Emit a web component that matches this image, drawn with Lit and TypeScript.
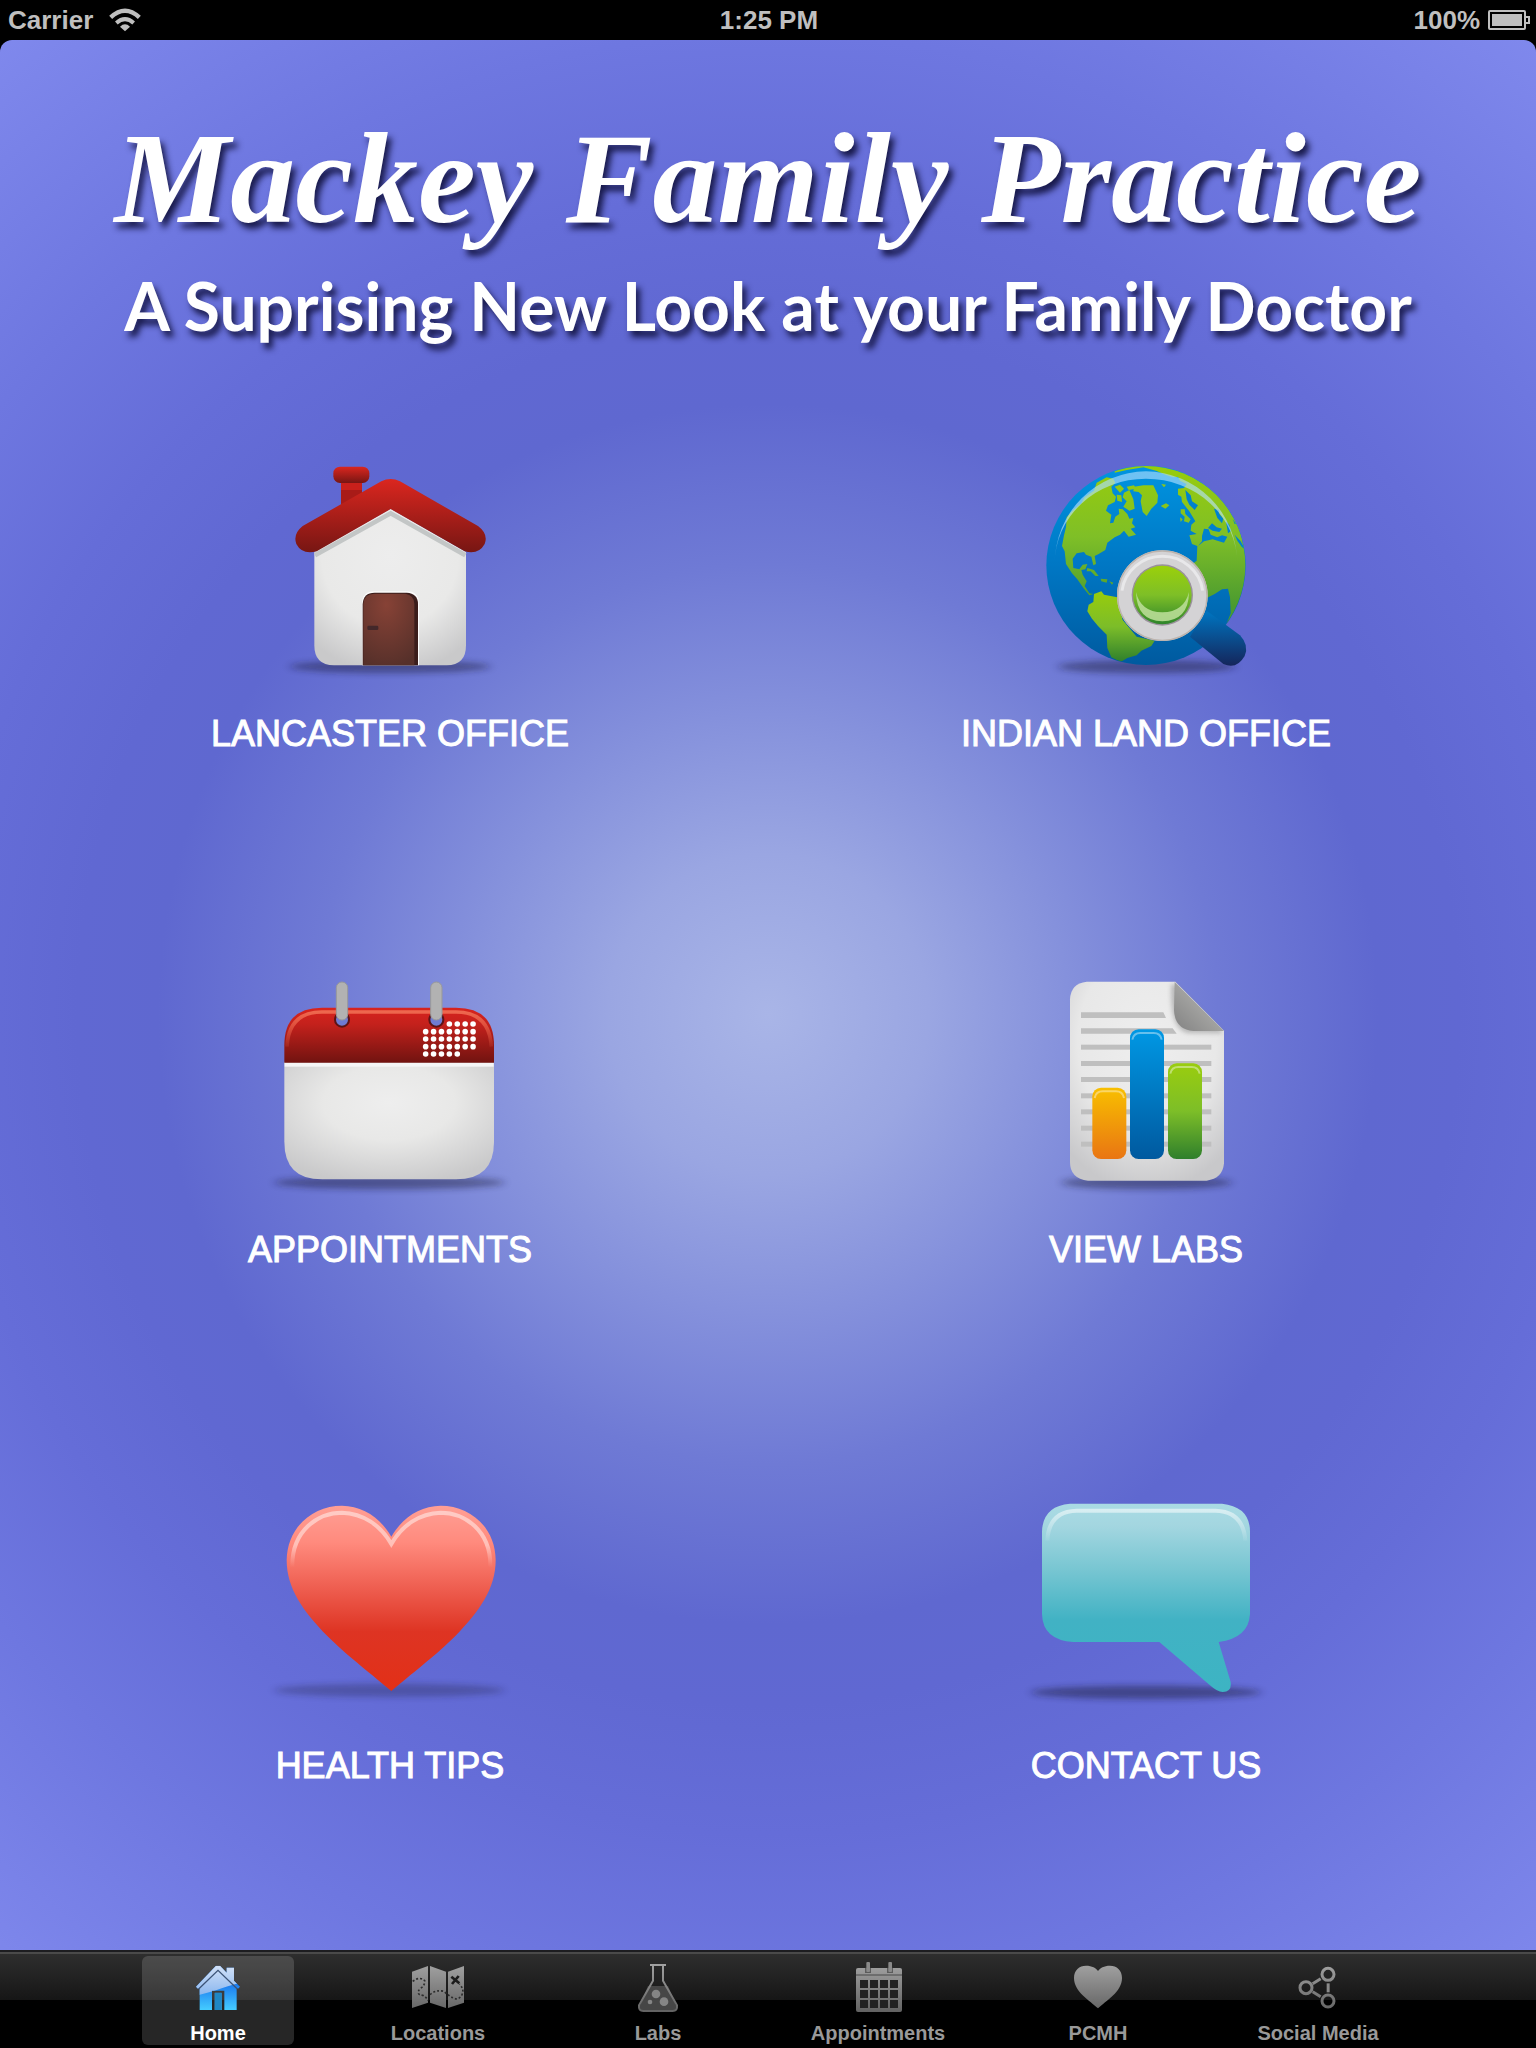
import { LitElement, html, svg, css } from "lit";
import { customElement, state } from "lit/decorators.js";

const dots: Array<[number, number]> = [];
[192, 215, 237, 260, 282].forEach((y, row) => {
  for (let col = 0; col < 7; col++) {
    if (row === 0 && col < 3) continue;
    if (row === 4 && col > 4) continue;
    dots.push([617 + col * 23.7, y]);
  }
});

const shadow = (id: string, cx: number, cy: number, rx: number, strength = 0.42) => svg`
  <defs>
    <filter id=${id} x="-20%" y="-150%" width="140%" height="400%">
      <feGaussianBlur stdDeviation="14 9" />
    </filter>
  </defs>
  <ellipse cx=${cx} cy=${cy} rx=${rx} ry="20" fill="#15152e" opacity=${strength} filter="url(#${id})" />`;

const houseArt = html`
  <svg class="art" viewBox="210 30 840 720" aria-hidden="true">
    <defs>
      <linearGradient id="roof" x1="0" y1="0" x2="0" y2="1">
        <stop offset="0" stop-color="#db261f" />
        <stop offset="1" stop-color="#771613" />
      </linearGradient>
      <radialGradient id="wall" cx=".5" cy=".3" r=".75">
        <stop offset="0" stop-color="#ededed" />
        <stop offset=".6" stop-color="#e9e9e8" />
        <stop offset="1" stop-color="#c9c9ca" />
      </radialGradient>
      <radialGradient id="door" cx=".45" cy=".15" r=".9">
        <stop offset="0" stop-color="#874236" />
        <stop offset="1" stop-color="#56302a" />
      </radialGradient>
    </defs>
    ${shadow("s1", 630, 680, 300)}
    <path d="M403 336 L632 206 L858 336 V616 Q858 676 800 676 H462 Q403 676 403 616Z" fill="url(#wall)" />
    <path d="M405 346 L632 220 L856 346" fill="none" stroke="#c3c6c6" stroke-width="14" />
    <path d="M546 676 V492 Q546 454 584 454 H680 Q717 454 717 492 V676Z" fill="#fbfbfb" />
    <path d="M548 676 V492 Q550 458 584 458 H680 Q714 460 714 492 V676Z" fill="#3b1d1b" />
    <path d="M550 676 V492 Q552 461 584 461 H676 Q703 466 703 492 V676Z" fill="url(#door)" />
    <rect x="562" y="557" width="33" height="13" rx="4" fill="#43282a" />
    <path d="M483 122 H546 V165 L483 200Z" fill="#a81b18" />
    <path d="M483 128 H546 V150 H483Z" fill="#c9201b" />
    <rect x="460" y="80" width="108" height="49" rx="20" fill="url(#roof)" />
    <path d="M604 124 Q632 110 660 124 L894 258 Q926 282 914 312 Q896 345 854 334 L632 207 L410 334 Q366 345 349 312 Q338 282 368 258Z" fill="url(#roof)" />
  </svg>`;

const globeArt = html`
  <svg class="art" viewBox="198 30 840 720" aria-hidden="true">
    <defs>
      <linearGradient id="sea" x1="0" y1="0" x2="0" y2="1">
        <stop offset="0" stop-color="#0094e0" />
        <stop offset=".5" stop-color="#0077c4" />
        <stop offset="1" stop-color="#005a9f" />
      </linearGradient>
      <linearGradient id="land" x1="0" y1="80" x2="0" y2="500" gradientUnits="userSpaceOnUse">
        <stop offset="0" stop-color="#98cc0c" />
        <stop offset=".5" stop-color="#7fbf27" />
        <stop offset="1" stop-color="#4a9a30" />
      </linearGradient>
      <linearGradient id="land2" x1="0" y1="455" x2="0" y2="665" gradientUnits="userSpaceOnUse">
        <stop offset="0" stop-color="#98cc0c" />
        <stop offset=".5" stop-color="#7cbd29" />
        <stop offset="1" stop-color="#2f802c" />
      </linearGradient>
      <linearGradient id="lens" x1="0" y1="0" x2="0" y2="1">
        <stop offset="0" stop-color="#9bd00a" />
        <stop offset=".5" stop-color="#7ebf27" />
        <stop offset="1" stop-color="#2d842b" />
      </linearGradient>
      <linearGradient id="grip" x1="0" y1="520" x2="0" y2="680" gradientUnits="userSpaceOnUse">
        <stop offset="0" stop-color="#0072bd" />
        <stop offset="1" stop-color="#152459" />
      </linearGradient>
      <linearGradient id="gloss" x1="0" y1="95" x2="0" y2="375" gradientUnits="userSpaceOnUse">
        <stop offset="0" stop-color="#a8dcff" stop-opacity=".65" />
        <stop offset=".6" stop-color="#c8e8ff" stop-opacity=".6" />
        <stop offset="1" stop-color="#c8e8ff" stop-opacity=".15" />
      </linearGradient>
      <clipPath id="ball"><circle cx="618" cy="376" r="298" /></clipPath>
    </defs>
    ${shadow("s2", 620, 680, 266)}
    <circle cx="618" cy="376" r="299" fill="url(#sea)" />
    <g clip-path="url(#ball)" fill="url(#land)">
      <path d="M470 128 L500 112 L520 116 L526 128 L514 140 L518 160 L528 170 L524 186 L504 196 L498 212 L514 224 L510 250 L520 248 L526 230 L538 222 L536 206 L548 208 L562 222 L568 236 L580 234 L576 250 L586 262 L572 266 L588 284 L566 290 L552 272 L540 284 L524 292 L502 308 L496 330 L476 342 L464 348 L468 372 L460 376 L454 350 L438 344 L432 336 L410 340 L398 356 L400 384 L418 388 L428 374 L442 372 L436 388 L424 390 L428 404 L440 424 L434 438 L448 460 L460 462 L448 466 L432 446 L412 418 L396 400 L378 372 L374 334 L366 318 L372 286 L378 262 L380 232 L400 210 L424 190 L434 172 L462 152Z" />
      <path d="M524 140 L540 134 L552 146 L540 158Z M560 140 L582 136 L588 146 L566 150Z M552 158 L568 150 L580 178 L584 206 L568 212 L550 200 L560 184 L548 172Z M530 164 L544 166 L546 186 L532 182Z" />
      <path d="M582 140 L610 136 L640 136 L654 166 L652 188 L634 206 L620 228 L608 216 L602 184 L606 166 L596 156 L580 154Z" />
      <path d="M662 198 L678 190 L688 196 L676 206Z M664 132 L678 134 L672 142Z" />
      <path d="M442 384 L462 390 L476 408 L466 408 L452 394 L440 394Z M482 416 L502 418 L500 428 L484 424Z M508 424 L520 428 L516 434Z" />
      <path d="M524 70 H712 L722 110 L698 112 L676 104 L648 92 L610 82 L560 90 L524 98Z" />
      <path d="M700 84 Q890 160 924 350 L924 420 L900 524 L858 556 L872 520 L870 472 L864 446 L846 448 L824 462 L800 474 L764 440 L762 368 L770 362 L772 318 L756 312 L748 286 L770 282 L752 272 L754 254 L766 244 L748 214 L726 186 L724 170 L714 164 L714 146 L732 144 L740 132 L720 122Z" />
      <path d="M722 208 L734 208 L736 222 L752 238 L746 248 L732 244 L734 230 L722 220Z M720 232 L728 238 L722 246Z" />
      <path d="M740 70 H930 V300 L900 300 L800 150Z" />
    </g>
    <g clip-path="url(#ball)" fill="#0081cf">
      <path d="M736 150 L752 166 L756 184 L774 196 L764 210 L748 194 L740 178Z" />
      <path d="M786 288 L792 266 L806 268 L812 284 L832 292 L846 286 L862 290 L852 308 L832 302 L818 298 L792 304 L774 318 L786 304Z" />
      <path d="M804 264 L816 250 L830 262 L846 266 L838 276 L818 272Z M822 206 L836 210 L838 222 L850 236 L846 250 L832 234Z M858 244 L868 254 L872 274 L864 280Z" />
      <path d="M884 284 L902 304 L914 326 L906 322 L892 302Z M878 236 L888 252 L884 252Z" />
    </g>
    <g clip-path="url(#ball)">
      <path d="M462 462 L484 454 L492 464 L532 472 L548 540 L590 590 L644 602 L634 618 L604 632 L590 646 L562 654 L542 666 L514 652 L502 624 L500 584 L474 558 L456 536 L442 514 L446 494 L460 486Z" fill="url(#land2)" />
    </g>
    <path d="M344 372 A274 278 0 0 1 892 372 A274 256 0 0 0 344 372Z" fill="url(#gloss)" />
    <path d="M750 590 L800 512 L900 586 Q928 616 914 648 Q890 690 850 672Z" fill="url(#grip)" />
    <circle cx="667" cy="467" r="136" fill="#d4d3d5" />
    <circle cx="667" cy="467" r="134" fill="none" stroke="#bcb3ad" stroke-width="4" />
    <path d="M546 452 A122 118 0 0 1 788 452" fill="none" stroke="#efeff0" stroke-width="9" opacity=".75" />
    <circle cx="667" cy="465" r="92" fill="#99919b" />
    <circle cx="667" cy="465" r="88" fill="url(#lens)" />
    <path d="M588 456 Q602 516 667 517 Q732 516 747 456 Q746 542 667 544 Q590 542 588 456Z" fill="#b9dd96" opacity=".9" />
  </svg>`;

const calendarArt = html`
  <svg class="art" viewBox="90 18 840 720" aria-hidden="true">
    <defs>
      <linearGradient id="band" x1="0" y1="0" x2="0" y2="1">
        <stop offset="0" stop-color="#d8241e" />
        <stop offset=".3" stop-color="#c4211c" />
        <stop offset="1" stop-color="#711310" />
      </linearGradient>
      <radialGradient id="sheet" cx=".5" cy=".35" r=".7">
        <stop offset="0" stop-color="#eeeeee" />
        <stop offset=".45" stop-color="#e8e8e7" />
        <stop offset="1" stop-color="#c9c9ca" />
      </radialGradient>
      <linearGradient id="shine" x1="0" y1="150" x2="0" y2="265" gradientUnits="userSpaceOnUse">
        <stop offset="0" stop-color="#ef6a50" />
        <stop offset="1" stop-color="#ef6a50" stop-opacity=".1" />
      </linearGradient>
    </defs>
    ${shadow("s3", 508, 668, 345)}
    <path d="M193 305 H822 V545 Q822 658 708 658 H306 Q193 658 193 545Z" fill="url(#sheet)" />
    <rect x="194" y="308" width="627" height="12" fill="#f5f5f6" />
    <path d="M193 308 V256 Q193 143 306 143 H708 Q822 143 822 256 V308Z" fill="url(#band)" />
    <path d="M201 260 Q206 156 306 156 H708 Q808 156 814 260" fill="none" stroke="url(#shine)" stroke-width="11" />
    ${[366, 649].map(
      (x) => svg`
        <circle cx=${x} cy="179" r="21" fill="#6f7bd2" stroke="#5c1416" stroke-width="6" />
        <rect x=${x - 17} y="66" width="34" height="114" rx="17" fill="#b2b2b2" stroke="#999" stroke-width="3" />`
    )}
    ${dots.map(([x, y]) => svg`<circle cx=${x} cy=${y} r="8.4" fill="#fff" />`)}
  </svg>`;

const reportArt = html`
  <svg class="art" viewBox="78 18 840 720" aria-hidden="true">
    <defs>
      <radialGradient id="page" cx=".5" cy=".3" r=".75">
        <stop offset="0" stop-color="#eeeeee" />
        <stop offset=".6" stop-color="#e8e8e8" />
        <stop offset="1" stop-color="#c8c8ca" />
      </radialGradient>
      <linearGradient id="curl" x1="0" y1="1" x2="1" y2="0">
        <stop offset="0" stop-color="#828282" />
        <stop offset=".5" stop-color="#a2a2a0" />
        <stop offset="1" stop-color="#8a8a8a" />
      </linearGradient>
      <linearGradient id="orange" x1="0" y1="0" x2="0" y2="1">
        <stop offset="0" stop-color="#f8bf00" />
        <stop offset="1" stop-color="#e97513" />
      </linearGradient>
      <linearGradient id="blue" x1="0" y1="0" x2="0" y2="1">
        <stop offset="0" stop-color="#0098e4" />
        <stop offset="1" stop-color="#00599f" />
      </linearGradient>
      <linearGradient id="green" x1="0" y1="0" x2="0" y2="1">
        <stop offset="0" stop-color="#9acd0e" />
        <stop offset=".5" stop-color="#7dbe28" />
        <stop offset="1" stop-color="#2f7f2c" />
      </linearGradient>
      <filter id="soft"><feGaussianBlur stdDeviation="6" /></filter>
    </defs>
    ${shadow("s4", 500, 668, 255)}
    <path d="M320 65 H586 L732 212 V610 Q728 656 680 662 H324 Q270 656 270 606 V118 Q272 70 320 65Z" fill="url(#page)" />
    <g fill="#bfbfbf">
      <path d="M303 157 H550 L558 174 H303Z M303 205 H578 L590 221 H303Z" />
      ${[254, 303, 351, 400, 448, 497, 545].map(
        (y) => svg`<rect x="303" y=${y} width="391" height="15" />`
      )}
    </g>
    <path d="M574 72 Q566 216 630 220 H722 L726 214 L586 72Z" fill="#888" opacity=".5" filter="url(#soft)" />
    <path d="M584 66 L732 213 H640 Q584 208 582 150Z" fill="url(#curl)" />
    <rect x="337" y="383" width="102" height="214" rx="26" fill="url(#orange)" />
    <rect x="450" y="208" width="102" height="389" rx="26" fill="url(#blue)" />
    <rect x="564" y="310" width="102" height="287" rx="26" fill="url(#green)" />
    <g fill="none" stroke="#fff" stroke-width="6" opacity=".4">
      <path d="M344 414 Q348 394 368 394 H408 Q428 394 432 414" />
      <path d="M457 239 Q461 219 481 219 H521 Q541 219 545 239" />
      <path d="M571 341 Q575 321 595 321 H635 Q655 321 659 341" />
    </g>
  </svg>`;

const heartArt = html`
  <svg class="art" viewBox="90 6 840 720" aria-hidden="true">
    <defs>
      <linearGradient id="heart" x1="0" y1="0" x2="0" y2="1">
        <stop offset="0" stop-color="#ff9f95" />
        <stop offset=".2" stop-color="#ff8a7d" />
        <stop offset=".45" stop-color="#ee5d4f" />
        <stop offset=".68" stop-color="#de3423" />
        <stop offset="1" stop-color="#e23017" />
      </linearGradient>
      <linearGradient id="rim" x1="0" y1="95" x2="0" y2="262" gradientUnits="userSpaceOnUse">
        <stop offset="0" stop-color="#ffcbc5" />
        <stop offset=".6" stop-color="#ffc0b8" />
        <stop offset="1" stop-color="#ffb0a8" stop-opacity="0" />
      </linearGradient>
    </defs>
    ${shadow("s5", 508, 631, 345, 0.28)}
    <path d="M514 633 C430 562 385 530 322 468 C250 394 200 326 200 240 C202 140 280 77 366 77 C428 78 480 112 514 170 C548 112 600 78 662 77 C748 77 826 140 827 240 C827 326 778 394 706 468 C643 530 598 562 514 633Z" fill="url(#heart)" />
    <path d="M217 262 C214 150 296 98 366 98 C430 100 482 136 514 192 C546 136 598 100 662 98 C732 98 814 150 811 262" fill="none" stroke="url(#rim)" stroke-width="12" />
  </svg>`;

const bubbleArt = html`
  <svg class="art" viewBox="78 6 840 720" aria-hidden="true">
    <defs>
      <linearGradient id="bubble" x1="0" y1="70" x2="0" y2="635" gradientUnits="userSpaceOnUse">
        <stop offset="0" stop-color="#aadbe4" />
        <stop offset=".12" stop-color="#a3d6e0" />
        <stop offset=".35" stop-color="#78c6d2" />
        <stop offset=".62" stop-color="#41b2c4" />
        <stop offset="1" stop-color="#3db4c3" />
      </linearGradient>
      <linearGradient id="edge" x1="0" y1="90" x2="0" y2="182" gradientUnits="userSpaceOnUse">
        <stop offset="0" stop-color="#d8eef2" />
        <stop offset="1" stop-color="#d8eef2" stop-opacity=".1" />
      </linearGradient>
    </defs>
    ${shadow("s6", 498, 637, 345, 0.45)}
    <path d="M270 71 H726 Q810 80 810 155 V402 Q806 474 716 486 L752 606 Q756 636 728 636 Q712 636 690 616 L538 486 H280 Q188 480 186 402 V155 Q188 78 270 71Z" fill="url(#bubble)" />
    <path d="M202 182 Q206 94 290 92 H706 Q790 94 796 182" fill="none" stroke="url(#edge)" stroke-width="12" />
  </svg>`;

const metal = (id: string) => svg`
  <linearGradient id=${id} x1="0" y1="10" x2="0" y2="156" gradientUnits="userSpaceOnUse">
    <stop offset="0" stop-color="#a3a3a3" />
    <stop offset="1" stop-color="#626262" />
  </linearGradient>`;

const tabHome = html`
  <svg class="glyph" viewBox="0 0 180 180" aria-hidden="true">
    <defs>
      <linearGradient id="hb" x1="0" y1="75" x2="0" y2="150" gradientUnits="userSpaceOnUse">
        <stop offset="0" stop-color="#1c7df0" />
        <stop offset="1" stop-color="#45ccff" />
      </linearGradient>
      <linearGradient id="hp" x1="0" y1="17" x2="0" y2="110" gradientUnits="userSpaceOnUse">
        <stop offset="0" stop-color="#d3e2f8" />
        <stop offset="1" stop-color="#86b4ee" />
      </linearGradient>
      <clipPath id="hclip">
        <path d="M84 17 H96 L116 38 V23 H138 V62 L156 80 L150 86 L146 83 V150 H109 V92 H72 V150 H35 V83 L30 86 L24 80Z M80 98 H101 V150 H80Z" />
      </clipPath>
    </defs>
    <g clip-path="url(#hclip)">
      <rect width="180" height="180" fill="url(#hb)" />
      <path d="M0 0 H180 V62 Q120 78 80 92 L30 106 L0 112Z" fill="url(#hp)" />
      <rect x="80" y="98" width="21" height="52" fill="#1f87c4" />
    </g>
    <path d="M32 87 L90 31 L148 87" fill="none" stroke="#3c5478" stroke-width="4" />
  </svg>`;

const tabMap = html`
  <svg class="glyph" viewBox="0 0 180 180" aria-hidden="true">
    <defs>${metal("m1")}</defs>
    <path d="M12 35 L60 18 V128 L12 144Z M66 18 L114 35 V144 L66 128Z M120 35 L168 18 V128 L120 144Z" fill="url(#m1)" />
    <path d="M14 64 Q36 48 50 62 Q52 76 36 86 Q22 104 44 106 Q56 112 60 122 M66 104 Q84 88 108 94 Q122 108 136 114 Q152 122 162 104 Q170 88 154 72" fill="none" stroke="#2c2c2c" stroke-width="5" stroke-dasharray="6 6" />
    <path d="M130 50 L154 70 M152 48 L132 72" stroke="#1c1c1c" stroke-width="8" />
  </svg>`;

const tabFlask = html`
  <svg class="glyph" viewBox="0 0 180 180" aria-hidden="true">
    <defs>${metal("m2")}</defs>
    <path d="M60 78 H120 L146 140 Q146 152 136 152 H44 Q34 152 34 140Z" fill="#464646" />
    <path d="M66 15 H114 M75 15 V62 L33 136 Q31 153 46 153 H134 Q149 153 147 136 L105 62 V15" fill="none" stroke="url(#m2)" stroke-width="6" />
    <g fill="#858585">
      <circle cx="84" cy="102" r="13" />
      <circle cx="66" cy="126" r="7" />
      <circle cx="108" cy="125" r="13" />
    </g>
  </svg>`;

const tabCalendar = html`
  <svg class="glyph" viewBox="0 0 180 180" aria-hidden="true">
    <defs>${metal("m3")}</defs>
    <rect x="24" y="24" width="138" height="132" rx="6" fill="url(#m3)" />
    <rect x="24" y="43" width="138" height="4" fill="#5c5c5c" />
    <g fill="#222">
      ${[60, 90, 120].map((y) =>
        [36, 66, 96, 126].map((x) => svg`<rect x=${x} y=${y} width="24" height="24" />`)
      )}
    </g>
    ${[60, 126].map(
      (x) => svg`<rect x=${x - 9} y="20" width="18" height="19" fill="#333" opacity=".6" /><rect x=${x - 5} y="6" width="11" height="30" rx="3" fill="#8a8a8a" />`
    )}
  </svg>`;

const tabHeart = html`
  <svg class="glyph" viewBox="0 0 180 180" aria-hidden="true">
    <defs>${metal("m4")}</defs>
    <path d="M90 145 C66 122 18 96 18 54 C18 30 34 17 54 17 C72 17 84 24 90 33 C96 24 108 17 126 17 C146 17 162 30 162 54 C162 96 114 122 90 145Z" fill="url(#m4)" />
  </svg>`;

const tabShare = html`
  <svg class="glyph" viewBox="0 0 180 180" aria-hidden="true">
    <defs>${metal("m5")}</defs>
    <g fill="none" stroke="url(#m5)" stroke-width="9">
      <circle cx="54" cy="83" r="18" />
      <circle cx="120" cy="43" r="18" />
      <circle cx="120" cy="123" r="18" />
      <path d="M74 71 L98 56 M74 95 L98 110" />
    </g>
    <rect x="116" y="70" width="9" height="27" fill="#8a8a8a" />
  </svg>`;

const tiles = [
  { label: "LANCASTER OFFICE", art: houseArt },
  { label: "INDIAN LAND OFFICE", art: globeArt },
  { label: "APPOINTMENTS", art: calendarArt },
  { label: "VIEW LABS", art: reportArt },
  { label: "HEALTH TIPS", art: heartArt },
  { label: "CONTACT US", art: bubbleArt },
];

const tabs = [
  { label: "Home", glyph: tabHome },
  { label: "Locations", glyph: tabMap },
  { label: "Labs", glyph: tabFlask },
  { label: "Appointments", glyph: tabCalendar },
  { label: "PCMH", glyph: tabHeart },
  { label: "Social Media", glyph: tabShare },
];

@customElement("status-bar")
class StatusBar extends LitElement {
  static styles = css`
    :host {
      display: grid;
      grid-template-columns: 1fr auto 1fr;
      align-items: center;
      height: 40px;
      padding: 0 6px 0 8px;
      color: #bfbfbf;
      font: bold 26px/40px "Liberation Sans", Arial, sans-serif;
    }
    .side {
      display: flex;
      align-items: center;
      gap: 16px;
    }
    .end {
      justify-content: flex-end;
      gap: 8px;
    }
    svg {
      display: block;
    }
  `;

  render() {
    return html`
      <div class="side">
        <span>Carrier</span>
        <svg width="32" height="24" viewBox="0 0 96 72" role="img" aria-label="Wi-Fi">
          <path d="M48 70 L33 56 Q48 42 63 56Z" fill="#bfbfbf" />
          <path d="M22 45 Q48 22 74 45" fill="none" stroke="#bfbfbf" stroke-width="12" />
          <path d="M5 28 Q48 -12 91 28" fill="none" stroke="#bfbfbf" stroke-width="13" />
        </svg>
      </div>
      <time>1:25 PM</time>
      <div class="side end">
        <span>100%</span>
        <svg width="42" height="22" viewBox="0 0 42 22" role="img" aria-label="Battery full">
          <rect x="1" y="2" width="36" height="18" rx="1" fill="none" stroke="#bfbfbf" stroke-width="2" />
          <rect x="4" y="5" width="30" height="12" fill="#bfbfbf" />
          <path d="M38 8 H41 V14 H38" fill="none" stroke="#bfbfbf" stroke-width="2" />
        </svg>
      </div>
    `;
  }
}

@customElement("app-root")
class AppRoot extends LitElement {
  @state() private active = "Home";

  static styles = css`
    :host {
      display: flex;
      flex-direction: column;
      min-height: 100vh;
      background: #000;
      font-family: "Liberation Sans", Arial, sans-serif;
    }
    main {
      flex: 1;
      display: flex;
      flex-direction: column;
      gap: 104px;
      padding: 58px 12px 0;
      border-radius: 12px 12px 0 0;
      background: radial-gradient(
        circle at 50% 51%,
        #a9b5e7 0,
        #9aa6e2 160px,
        #8591dc 300px,
        #6f7ad5 450px,
        #5f68d0 610px,
        #6068d2 690px,
        #656dd8 820px,
        #6e77e0 980px,
        #8089ed 1250px
      );
    }
    header {
      display: flex;
      flex-direction: column;
      align-items: center;
      gap: 8px;
      color: #fff;
      white-space: nowrap;
      text-shadow: 4px 6px 6px rgba(10, 10, 50, 0.85);
    }
    h1 {
      margin: 0;
      font: italic bold 130px/160px "Liberation Serif", "Times New Roman", serif;
    }
    .tagline {
      margin: 0;
      font: bold 66px/80px Lato, sans-serif;
    }
    .tiles {
      display: grid;
      grid-template-columns: 1fr 1fr;
      row-gap: 210px;
      justify-items: center;
    }
    .tile {
      display: flex;
      flex-direction: column;
      align-items: center;
      gap: 22px;
      color: #fff;
      font-size: 36px;
      line-height: 44px;
      text-decoration: none;
      -webkit-text-stroke: 1px #fff;
    }
    .art {
      display: block;
      width: 280px;
      height: 240px;
    }
    .tabs {
      display: flex;
      justify-content: center;
      gap: 68px;
      padding: 4px 0 3px;
      border-top: 2px solid #1d1d20;
      box-shadow: inset 0 2px 0 #4a4a4a;
      background: linear-gradient(#2f2f2f 0, #161616 48px, #000 48px);
    }
    .tab {
      display: flex;
      flex-direction: column;
      align-items: center;
      gap: 1px;
      width: 152px;
      padding: 4px 0 0;
      border: 0;
      border-radius: 6px;
      background: none;
      color: #999;
      font: bold 20px/24px "Liberation Sans", Arial, sans-serif;
      white-space: nowrap;
    }
    .tab.on {
      background: rgba(255, 255, 255, 0.15);
      color: #fff;
    }
    .glyph {
      display: block;
      width: 60px;
      height: 60px;
    }
  `;

  render() {
    return html`
      <status-bar></status-bar>
      <main>
        <header>
          <h1>Mackey Family Practice</h1>
          <p class="tagline">A Suprising New Look at your Family Doctor</p>
        </header>
        <section class="tiles">
          ${tiles.map(
            (t) => html`<a class="tile" href="#">${t.art}<span>${t.label}</span></a>`
          )}
        </section>
      </main>
      <nav class="tabs">
        ${tabs.map(
          (t) => html`<button
            type="button"
            class="tab ${t.label === this.active ? "on" : ""}"
            @click=${() => (this.active = t.label)}
          >
            ${t.glyph}<span>${t.label}</span>
          </button>`
        )}
      </nav>
    `;
  }
}
